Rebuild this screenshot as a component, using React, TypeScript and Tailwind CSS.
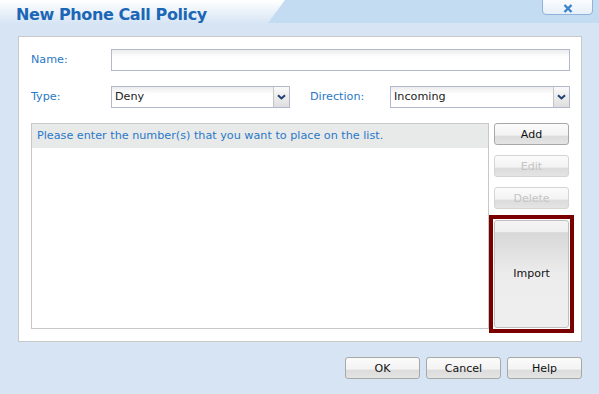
import React from 'react';

const font = { fontFamily: '"DejaVu Sans", Verdana, sans-serif' };

function Btn({ label, disabled, className = '' }: { label: string; disabled?: boolean; className?: string }) {
  return (
    <button
      className={`h-[22px] w-[75px] rounded-[3px] border text-[11px] leading-none ${
        disabled ? 'border-[#d4d4d4] text-[#c4c4c4]' : 'border-[#a8a8a8] text-[#111]'
      } bg-[linear-gradient(#fbfbfb_0%,#f3f3f3_55%,#dcdcdc_62%,#e4e4e4_100%)] ${className}`}
    >
      {label}
    </button>
  );
}

function Chevron() {
  return (
    <svg width="9" height="6" viewBox="0 0 9 6">
      <path d="M1 1.2L4.5 4.5L8 1.2" fill="none" stroke="#1f3f73" strokeWidth="2" />
    </svg>
  );
}

function Select({ value, className = '' }: { value: string; className?: string }) {
  return (
    <div className={`flex h-[22px] border border-[#b4b8cc] bg-white ${className}`}>
      <div className="flex flex-1 items-center pl-[3px] text-[11.2px] text-[#222] bg-[linear-gradient(#ececec_0%,#ffffff_35%)]">
        {value}
      </div>
      <div className="flex w-[16px] items-center justify-center border-l border-[#c6c6c6] bg-[linear-gradient(#fafafa,#dedede)]">
        <Chevron />
      </div>
    </div>
  );
}

export default function App() {
  return (
    <div className="relative h-[394px] w-[599px] overflow-hidden bg-[#d6e4f4]" style={font}>
      {/* Header */}
      <div className="relative h-[36px] bg-[linear-gradient(#ffffff_0%,#d6e4f4_24px)]">
        <div className="absolute right-0 top-0 h-[23px] w-[331px] bg-[#c4dcf1] [clip-path:polygon(17px_0,100%_0,100%_100%,0_100%)]" />
        <div className="relative pl-[16px] pt-[5px] text-[16px] font-bold leading-[20px] text-[#1b67b5] tracking-[-0.4px]">
          New Phone Call Policy
        </div>
        <div className="absolute right-[6px] top-[-4px] flex h-[19px] w-[51px] items-end justify-center rounded-b-[4px] border border-[#8fb3da] bg-[linear-gradient(#ffffff,#e6eff9)] pb-[1px]">
          <svg width="10" height="9" viewBox="0 0 10 9">
            <path d="M1.5 1L8.5 8M8.5 1L1.5 8" stroke="#3b82c8" strokeWidth="2.4" />
          </svg>
        </div>
      </div>

      {/* Panel */}
      <div className="ml-[18px] flex h-[306px] w-[564px] flex-col border border-[#c8c8c8] bg-white pl-[12px] pr-[6px] pt-[12px] text-[11.2px]">
        <div className="flex h-[22px] items-center">
          <div className="w-[80px] text-[#2a78c6]">Name:</div>
          <div className="h-[22px] w-[459px] border border-[#b4b8cc] bg-[linear-gradient(#ececec_0%,#ffffff_35%)]" />
        </div>
        <div className="mt-[15px] flex h-[22px] items-center">
          <div className="w-[80px] text-[#2a78c6]">Type:</div>
          <Select value="Deny" className="w-[179px]" />
          <div className="ml-[20px] w-[80px] text-[#2a78c6]">Direction:</div>
          <Select value="Incoming" className="w-[180px]" />
        </div>
        <div className="mt-[15px] flex">
          <div className="h-[206px] w-[458px] border border-[#c8c8c8]">
            <div className="flex h-[24px] items-center bg-[#e8eaea] pl-[5px] text-[#2a78c6]">
              Please enter the number(s) that you want to place on the list.
            </div>
          </div>
          <div className="flex w-[85px] flex-col">
            <Btn label="Add" className="ml-[5px]" />
            <Btn label="Edit" disabled className="ml-[5px] mt-[10px]" />
            <Btn label="Delete" disabled className="ml-[5px] mt-[10px]" />
            <div className="mt-[6px] h-[118px] w-[85px] border-[4px] border-[#7a0000] p-[1px]">
              <button className="h-full w-full rounded-[3px] border border-[#c0c0c0] text-[11px] text-[#111] bg-[linear-gradient(#f4f4f4_0%,#f0f0f0_10%,#d8d8d8_11%,#ececec_50%,#efefef_100%)]">
                Import
              </button>
            </div>
          </div>
        </div>
      </div>

      {/* Footer */}
      <div className="mt-[15px] flex justify-end gap-[6px] pr-[17px]">
        <Btn label="OK" />
        <Btn label="Cancel" />
        <Btn label="Help" />
      </div>
    </div>
  );
}
